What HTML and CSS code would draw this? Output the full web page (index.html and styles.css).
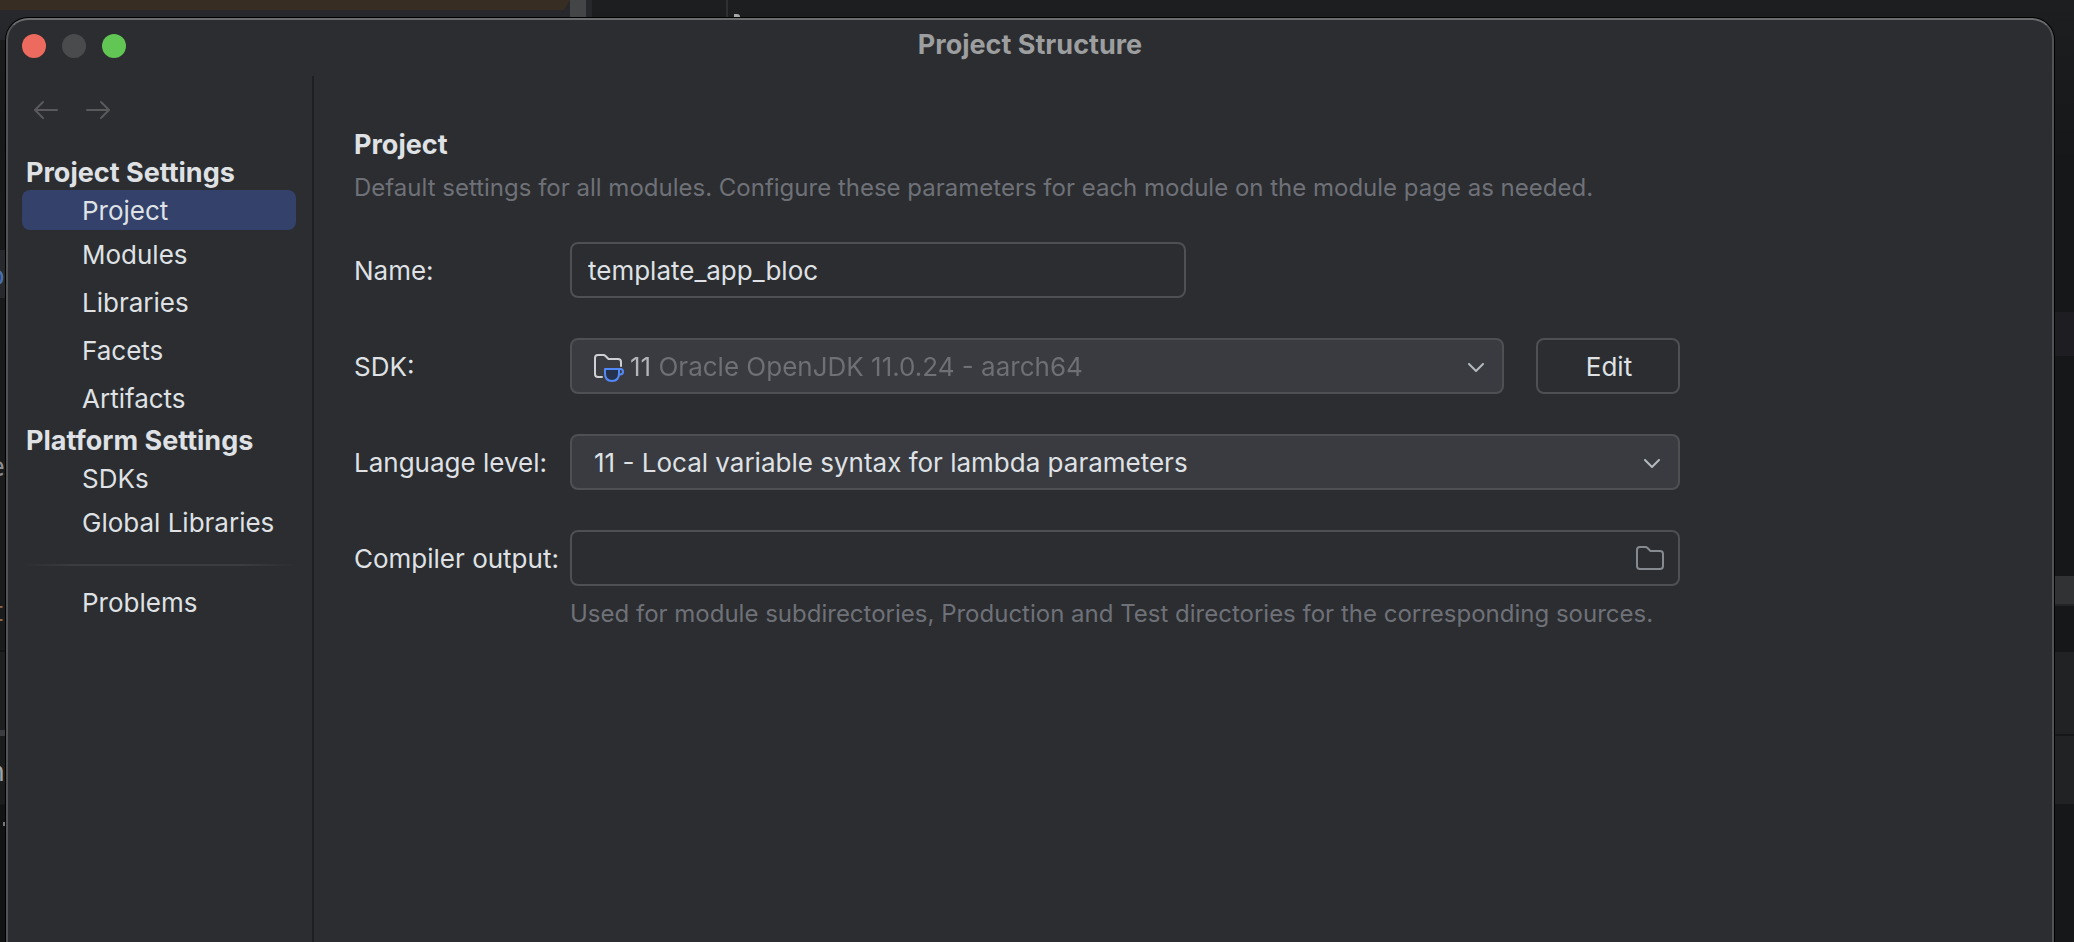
FILE: index.html
```html
<!DOCTYPE html>
<html lang="en">
	<head>
		<meta charset="UTF-8">
		<title>Project Structure</title>
		<link rel="stylesheet" href="styles.css">
	</head>
	<body>
		<!-- editor window behind the dialog -->
		<div class="backdrop" aria-hidden="true">
			<div class="tab"></div>
			<div class="scroll"></div>
			<div class="split"></div>
			<div class="speck"></div>
			<div class="edge edge-left">
				<i class="band caret-row"></i>
				<i class="band split-row"></i>
				<i class="band tool-row"></i>
				<i class="band bottom-row"></i>
				<span class="code code-blue">o</span>
				<span class="code code-white">e</span>
				<span class="code code-orange">t</span>
				<span class="code code-light">n</span>
				<i class="dot"></i>
			</div>
			<div class="edge edge-right">
				<i class="band r1"></i>
				<i class="band r2"></i>
				<i class="band r3"></i>
				<i class="band r4"></i>
			</div>
		</div>

		<div class="window">
			<header class="titlebar">
				<div class="lights">
					<button class="light close" aria-label="Close"></button>
					<button class="light minimize" aria-label="Minimize" disabled></button>
					<button class="light zoom" aria-label="Zoom"></button>
				</div>
				<h1>Project Structure</h1>
			</header>
			<div class="content">
				<aside class="sidebar">
					<div class="history">
						<button aria-label="Back" disabled>
							<svg width="32" height="32" viewBox="0 0 32 32"><path d="M27 16H5M13 8L5 16L13 24"/></svg>
						</button>
						<button aria-label="Forward" disabled>
							<svg width="32" height="32" viewBox="0 0 32 32"><path d="M5 16H27M19 8L27 16L19 24"/></svg>
						</button>
					</div>
					<nav>
						<h2>Project Settings</h2>
						<ul>
							<li><a href="#project" class="active">Project</a></li>
							<li><a href="#modules">Modules</a></li>
							<li><a href="#libraries">Libraries</a></li>
							<li><a href="#facets">Facets</a></li>
							<li><a href="#artifacts">Artifacts</a></li>
						</ul>
						<h2>Platform Settings</h2>
						<ul>
							<li><a href="#sdks" class="first">SDKs</a></li>
							<li><a href="#global">Global Libraries</a></li>
						</ul>
						<hr>
						<ul>
							<li><a href="#problems">Problems</a></li>
						</ul>
					</nav>
				</aside>
				<main class="main" id="project">
					<h2>Project</h2>
					<p class="hint">Default settings for all modules. Configure these parameters for each module on the module page as needed.</p>
					<form class="form">
						<label for="name">Name:</label>
						<input class="field name" type="text" id="name" value="template_app_bloc">

						<label for="sdk">SDK:</label>
						<div class="line">
							<div class="field combo sdk">
								<svg class="jdk" width="32" height="32" viewBox="0 0 32 32">
									<path class="folder" d="M10 25H6Q3 25 3 22V6Q3 3 6 3H11.500Q12.500 3 13.500 4L16.500 7H26Q29 7 29 10V14"/>
									<path class="cup" d="M13 17H27V21.500Q27 29 20 29Q13 29 13 21.500Z"/>
									<path class="handle" d="M27 17H28.500Q31 17 31 19.700Q31 22.500 28 22.500H27"/>
								</svg>
								<select id="sdk">
									<option>11 Oracle OpenJDK 11.0.24 - aarch64</option>
								</select>
								<svg class="arrow" width="16" height="10" viewBox="0 0 16 10"><path d="M1 1L8 8L15 1"/></svg>
							</div>
							<button type="button" class="field edit">Edit</button>
						</div>

						<label for="level">Language level:</label>
						<div class="field combo">
							<select id="level">
								<option>11 - Local variable syntax for lambda parameters</option>
							</select>
							<svg class="arrow" width="16" height="10" viewBox="0 0 16 10"><path d="M1 1L8 8L15 1"/></svg>
						</div>

						<label for="output">Compiler output:</label>
						<div class="field path">
							<input type="text" id="output">
							<button type="button" aria-label="Browse">
								<svg width="32" height="32" viewBox="0 0 32 32"><path d="M3 8Q3 5 6 5H11.500Q12.500 5 13.500 6L16.500 9H26Q29 9 29 12V24Q29 27 26 27H6Q3 27 3 24Z"/></svg>
							</button>
						</div>
						<p class="hint under">Used for module subdirectories, Production and Test directories for the corresponding sources.</p>
					</form>
				</main>
			</div>
		</div>
	</body>
</html>
```
FILE: styles.css
```css
*{
	margin: 0;
	padding: 0;
	box-sizing: border-box;
}
body{
	min-height: 100vh;
	padding: 18px 20px 0 6px;
	background: #17181a;
	color: #dfe1e5;
	font: 26px/32px Inter, "Liberation Sans", sans-serif;
	overflow: hidden;
}
ul{
	list-style: none;
}
a{
	color: inherit;
	text-decoration: none;
}
button, input, select{
	font: inherit;
	color: inherit;
	background: none;
	border: 0;
	outline: none;
}
svg{
	display: block;
	fill: none;
	stroke-width: 2;
	stroke-linecap: round;
	stroke-linejoin: round;
}
h1, h2{
	font-size: 27px;
	font-weight: 700;
}

/* editor behind the dialog */
.backdrop{
	position: absolute;
	inset: 0;
	overflow: hidden;
	background: linear-gradient(#1d1e20, #161719 160px);
}
.backdrop div, .backdrop i, .backdrop span{
	position: absolute;
}
.tab{
	left: 0;
	top: 0;
	width: 570px;
	height: 40px;
	background: #27282b;
	border-top: 10px solid #382d22;
	border-right: 6px solid #27282b;
}
.scroll{
	left: 570px;
	top: 0;
	width: 22px;
	height: 40px;
	background: #444547;
	border-right: 6px solid #27282b;
}
.split{
	left: 726px;
	top: 0;
	width: 2px;
	height: 40px;
	background: #2f3033;
}
.speck{
	left: 734px;
	top: 14px;
	width: 6px;
	height: 4px;
	border-radius: 0 3px 0 0;
	background: #a5a6a8;
}
.edge{
	top: 0;
	bottom: 0;
}
.edge-left{
	left: 0;
	width: 5px;
	background: linear-gradient(transparent 20px, #18191b 200px, #1b1c1e 804px, #121315 805px);
}
.edge-right{
	right: 0;
	width: 19px;
}
.band{
	left: 0;
	right: 0;
}
.caret-row{
	top: 250px;
	height: 48px;
	background: #28292d;
}
.split-row{
	top: 650px;
	height: 2px;
	background: #121314;
}
.tool-row{
	top: 730px;
	height: 6px;
	background: #3b3c3f;
}
.bottom-row{
	top: 652px;
	height: 78px;
	background: #1e1f21;
}
.code{
	right: 0;
	font: 26px/32px "DejaVu Sans Mono", monospace;
}
.code-blue{
	top: 260px;
	color: #4a6fae;
}
.code-white{
	top: 451px;
	color: #8c8e93;
}
.code-orange{
	top: 596px;
	color: #8f6a4b;
}
.code-light{
	top: 756px;
	color: #a3a4a7;
}
.dot{
	right: 0;
	top: 822px;
	width: 2px;
	height: 4px;
	background: #77787a;
}
.r1{
	top: 312px;
	height: 44px;
	background: #1d1d22;
}
.r2{
	top: 576px;
	height: 30px;
	background: #313233;
	border-bottom: 2px solid #232425;
}
.r3{
	top: 652px;
	height: 82px;
	background: #212223;
}
.r4{
	top: 736px;
	height: 68px;
	background: #212223;
}

/* dialog */
.window{
	position: relative;
	display: flex;
	flex-direction: column;
	min-height: calc(100vh - 18px);
	background: #2b2d30;
	border: 2px solid #525355;
	border-top-color: #6c6d6e;
	border-bottom: 0;
	border-radius: 22px 22px 0 0;
	box-shadow: 0 0 0 1px #000;
}
.titlebar{
	display: grid;
	grid-template-columns: 1fr auto 1fr;
	align-items: center;
	height: 56px;
	padding: 0 14px 4px;
}
.lights{
	display: flex;
	gap: 16px;
}
.light{
	width: 24px;
	height: 24px;
	border-radius: 50%;
}
.close{
	background: #ed6a5f;
}
.minimize{
	background: #4a4b4d;
}
.zoom{
	background: #62c655;
}
h1{
	padding-bottom: 2px;
	color: #9d9e9f;
}
.content{
	flex: 1;
	display: flex;
}
.sidebar{
	width: 306px;
	border-right: 2px solid #1e1f22;
	padding: 18px 16px 0 14px;
}
.history{
	display: flex;
	gap: 20px;
	padding-left: 8px;
	margin-bottom: 28px;
}
.history svg{
	stroke: #5a5a5c;
}
nav h2{
	line-height: 34px;
	padding: 2px 0 0 4px;
}
nav a{
	display: block;
	padding: 2px 0 0 60px;
	line-height: 46px;
	border-radius: 8px;
}
nav a.active, nav a.first{
	line-height: 38px;
}
nav a.active{
	background: #33416b;
}
nav hr{
	height: 2px;
	margin: 18px 0 12px;
	border: 0;
	background: linear-gradient(90deg, transparent, #3c3d41 20%, #3c3d41 80%, transparent);
}
.main{
	flex: 1;
	padding: 53px 40px 40px;
}
.main h2{
	margin-bottom: 11px;
}
.hint{
	font-size: 24px;
	color: #6f7178;
}
.form{
	display: grid;
	grid-template-columns: 216px 1fr;
	row-gap: 40px;
	align-items: center;
	max-width: 1326px;
	margin-top: 38px;
}
.form label{
	padding-top: 2px;
}
.field{
	width: 100%;
	height: 56px;
	border: 2px solid #4e5054;
	border-radius: 8px;
}
.name{
	max-width: 616px;
	padding: 0 16px;
}
.line{
	display: flex;
	gap: 32px;
}
.combo{
	display: flex;
	align-items: center;
	background: #393b40;
	position: relative;
}
.combo select{
	flex: 1;
	height: 100%;
	padding: 2px 0 0 22px;
	appearance: none;
}
.sdk{
	flex: 1;
}
/* version number is lighter than the vendor name */
.combo #sdk{
	padding-left: 58px;
	color: transparent;
	background: linear-gradient(90deg, #b4b5b8 84px, #6f7075 84px);
	-webkit-background-clip: text;
	background-clip: text;
}
.arrow{
	position: absolute;
	right: 18px;
	margin-top: 4px;
	stroke: #b4b8bf;
	pointer-events: none;
}
.jdk{
	position: absolute;
	left: 20px;
	margin-top: 4px;
	pointer-events: none;
}
.jdk .folder{
	stroke: #ced0d6;
}
.jdk .cup{
	fill: #25324d;
}
.jdk .cup, .jdk .handle{
	stroke: #548af7;
}
.edit{
	width: 144px;
	padding: 2px 0 0 2px;
}
.path{
	display: flex;
	align-items: center;
	padding-right: 12px;
}
.path input{
	flex: 1;
	height: 100%;
	padding: 0 16px;
}
.path svg{
	stroke: #868a91;
}
.under{
	grid-column: 2;
	margin-top: -28px;
}
```
